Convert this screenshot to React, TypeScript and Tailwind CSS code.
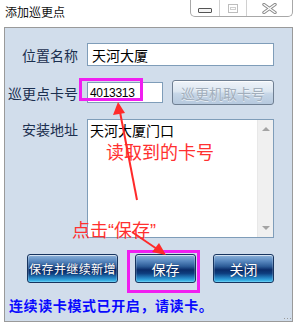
const CJK = "font-['Noto_Sans_CJK_SC','Noto_Sans',sans-serif]";

function WindowButtons() {
  return (
    <div className="mr-[4px] flex h-[17px] w-[103px] rounded-b-[5px] border-x border-b border-[#a8a8a8] bg-white">
      {/* minimize */}
      <div className="flex w-[28px] items-center justify-center pt-[5px]">
        <div className="h-[5px] w-[14px] rounded-[1px] border border-[#555] bg-[#f4f4f4]" />
      </div>
      {/* maximize (disabled) */}
      <div className="flex w-[27px] items-center justify-center border-l border-[#d0d0d0]">
        <div className="flex h-[9px] w-[10px] items-center justify-center border border-[#bdbdbd]">
          <div className="h-[3px] w-[6px] border border-[#cfcfcf]" />
        </div>
      </div>
      {/* close */}
      <div className="flex w-[46px] items-center justify-center border-l border-[#d0d0d0] pt-[1px]">
        <svg width="15" height="11" viewBox="0 0 15 11">
          <path d="M2 1.5 L13 9.5 M13 1.5 L2 9.5" stroke="#8a8a8a" strokeWidth="3.4" strokeLinecap="round" />
          <path d="M2 1.5 L13 9.5 M13 1.5 L2 9.5" stroke="#ffffff" strokeWidth="1.4" strokeLinecap="round" />
        </svg>
      </div>
    </div>
  );
}

function GlossyButton({ label, width, small }: { label: string; width: string; small?: boolean }) {
  return (
    <div
      className={`${width} flex h-[29px] items-center justify-center rounded-[3px] border border-[#17345f] bg-[linear-gradient(to_bottom,#8fb3da_0%,#5a89c0_22%,#2d5c98_42%,#0a2b68_55%,#0d3d7e_68%,#2789c8_86%,#45c6f3_100%)] shadow-[inset_0_1px_0_rgba(255,255,255,0.55),inset_0_0_0_1px_rgba(255,255,255,0.18)]`}
    >
      <span
        className={`${small ? "text-[12px] tracking-[0.4px]" : "text-[14px]"} leading-[16px] text-white [text-shadow:0_0_1px_rgba(0,0,40,0.6)]`}
      >
        {label}
      </span>
    </div>
  );
}

function Label({ text, className = "" }: { text: string; className?: string }) {
  return (
    <span className={`w-[73px] shrink-0 text-right text-[14px] leading-[16px] text-[#1b2f4f] ${className}`}>
      {text}
    </span>
  );
}

function Annotations() {
  return (
    <div className="pointer-events-none absolute inset-0">
      {/* highlight boxes */}
      <div className="absolute left-[79px] top-[78px] h-[23px] w-[64px] border-[3px] border-[#f01ef0]" />
      <div className="absolute left-[127px] top-[250px] h-[43px] w-[73px] border-[3px] border-[#f01ef0]" />

      <span className="absolute left-[106px] top-[141px] text-[18px] leading-[20px] text-[#ff3030]">
        读取到的卡号
      </span>
      <span className="absolute left-[72px] top-[219px] text-[18px] leading-[20px] text-[#ff3030]">
        点击<span className="font-['Liberation_Sans',sans-serif]">“</span>保存
        <span className="font-['Liberation_Sans',sans-serif]">”</span>
      </span>

      <svg className="absolute left-0 top-0" width="297" height="323" viewBox="0 0 297 323">
        {/* arrow to card number */}
        <line x1="137" y1="200" x2="120" y2="112" stroke="#ff2a2a" strokeWidth="2" />
        <polygon points="118,102 113,115 125,113" fill="#ff2a2a" />
        {/* arrow to save button */}
        <line x1="132" y1="232" x2="157" y2="249" stroke="#ff2a2a" strokeWidth="2" />
        <polygon points="166,255 152,252 159,243" fill="#ff2a2a" />
      </svg>

      {/* resize grip */}
      <div className="absolute left-[284px] top-[318px] flex gap-[2px]">
        <div className="h-[1px] w-[1px] bg-[#9a9a9a]" />
        <div className="h-[1px] w-[1px] bg-[#9a9a9a]" />
        <div className="h-[1px] w-[1px] bg-[#9a9a9a]" />
      </div>
    </div>
  );
}

export default function App() {
  return (
    <div className={`relative h-[323px] w-[297px] overflow-hidden bg-white ${CJK}`}>
      {/* title bar */}
      <div className="flex h-[27px] items-start justify-between">
        <span className="ml-[5px] mt-[5px] text-[12px] leading-[13px] text-[#111]">添加巡更点</span>
        <WindowButtons />
      </div>

      {/* form panel */}
      <div className="mx-[4px] h-[295px] border border-[#9a9a9a] bg-[#d1ddeb] pr-[18px] pt-[15px]">
        {/* 位置名称 */}
        <div className="flex h-[23px] items-center gap-[9px]">
          <Label text="位置名称" />
          <div className="flex h-[23px] flex-1 items-center border border-[#7f9db9] bg-white pl-[4px] text-[14px] leading-[16px] text-black">
            天河大厦
          </div>
        </div>

        {/* 巡更点卡号 */}
        <div className="mt-[14px] flex h-[25px] items-center gap-[9px]">
          <Label text="巡更点卡号" />
          <div className="flex h-[21px] w-[76px] items-center border border-[#7f9db9] bg-white pl-[2px] font-['Liberation_Sans',sans-serif] text-[12px] leading-[14px] tracking-[-0.3px] text-black">
            4013313
          </div>
          <div className="flex h-[25px] flex-1 items-center justify-center rounded-[3px] border border-[#6f7f92] bg-[linear-gradient(to_bottom,#eef3f9_0%,#dde7f1_45%,#c6d6e7_55%,#b6c9de_100%)] shadow-[inset_0_1px_0_rgba(255,255,255,0.8)]">
            <span className="text-[14px] leading-[16px] text-[#a2aebb] [text-shadow:0_1px_0_rgba(255,255,255,0.6)]">
              巡更机取卡号
            </span>
          </div>
        </div>

        {/* 安装地址 */}
        <div className="mt-[14px] flex items-start gap-[9px]">
          <Label text="安装地址" className="mt-[2px]" />
          <div className="flex h-[119px] flex-1 border border-[#7f9db9] bg-white">
            <div className="flex-1 pl-[2px] pt-[2px] text-[14px] leading-[16px] text-black">天河大厦门口</div>
            {/* scrollbar */}
            <div className="flex w-[16px] flex-col items-center justify-between border-l border-[#e8e8e8] bg-[#f0f0f0] pb-[7px] pt-[7px]">
              <div className="h-0 w-0 border-x-[4px] border-b-[4px] border-x-transparent border-b-[#a4a4a4]" />
              <div className="h-0 w-0 border-x-[4px] border-t-[4px] border-x-transparent border-t-[#a4a4a4]" />
            </div>
          </div>
        </div>

        {/* buttons */}
        <div className="mt-[16px] flex gap-[17px] pl-[22px]">
          <GlossyButton label="保存并继续新增" width="w-[91px]" small />
          <GlossyButton label="保存" width="w-[61px]" />
          <GlossyButton label="关闭" width="w-[61px]" />
        </div>

        {/* status */}
        <div className="mt-[14px] pl-[4px] text-[14px] font-bold leading-[16px] tracking-[0.6px] text-[#0a0aff]">
          连续读卡模式已开启，请读卡。
        </div>
      </div>

      <Annotations />
    </div>
  );
}
